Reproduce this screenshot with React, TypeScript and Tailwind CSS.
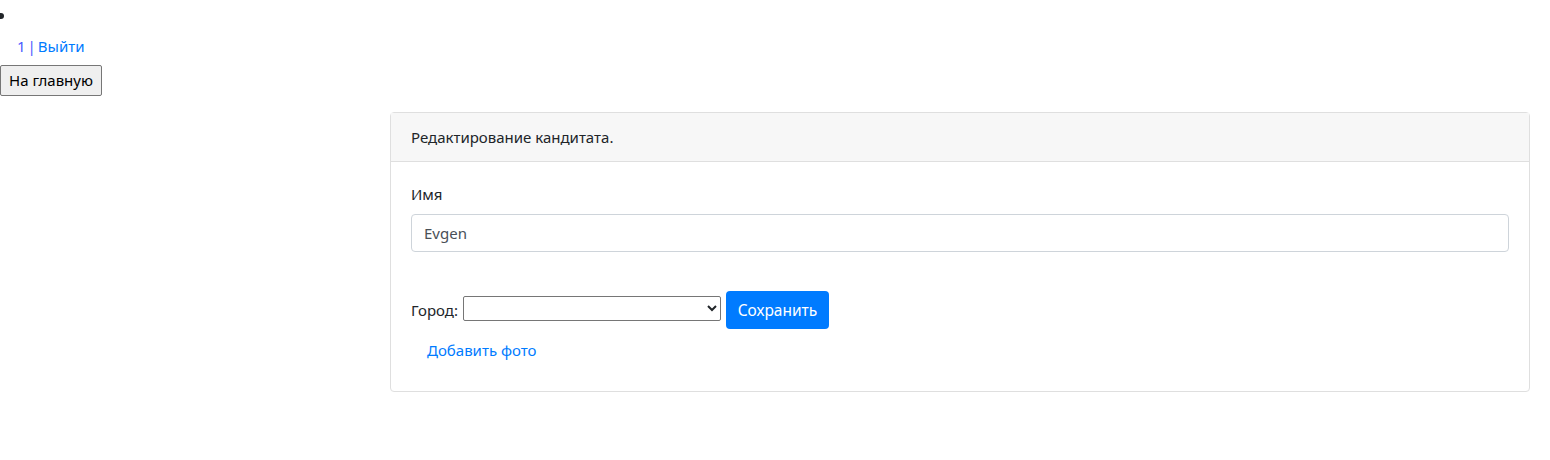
export default function App() {
  return (
    <div className="min-h-[460px] bg-white text-[16px] leading-6 text-[#212529]" style={{ fontFamily: '"Noto Sans", sans-serif' }}>
      <ul className="list-disc pl-0 pt-[3px]">
        <li className="ml-[16px] h-[21px]"></li>
      </ul>
      <div className="mt-[10px] pl-[17px] text-[15px] leading-6 flex">
        <span className="text-[#4a5cff]">1</span>
        <span className="ml-[2px] text-[#4a5cff]">|</span>
        <a href="#" className="ml-[2px] text-[#007bff]">Выйти</a>
      </div>
      <div className="mt-[7px]">
        <button className="border border-[#767676] bg-[#efefef] rounded-[2px] px-[8px] py-[1px] text-[15px] leading-[27px] text-black">
          На главную
        </button>
      </div>
      <div className="mt-[16px] ml-[390px] w-[1140px] border border-[#dfdfdf] rounded-[4px] text-[15px]">
        <div className="bg-[#f7f7f7] border-b border-[#dfdfdf] px-[20px] py-[12px] h-[49px] leading-6">
          Редактирование кандитата.
        </div>
        <div className="px-[20px] pt-[20px] pb-[29px]">
          <label className="block leading-6 mb-[8px]">Имя</label>
          <input
            defaultValue="Evgen"
            className="block w-full h-[38px] border border-[#ced4da] rounded-[4px] px-[12px] text-[#495057] outline-none"
          />
          <div className="mt-[39px] flex items-start">
            <span className="mt-[7px] leading-6">Город:</span>
            <select className="mt-[5px] ml-[5px] w-[258px] h-[25px] border border-[#767676] rounded-[2px] bg-white text-[13px]"></select>
            <button className="ml-[5px] h-[38px] w-[103px] bg-[#007bff] text-white rounded-[4px] text-[15.5px]">Сохранить</button>
          </div>
          <a href="#" className="block mt-[9px] ml-[16px] text-[#007bff] leading-6">Добавить фото</a>
        </div>
      </div>
    </div>
  );
}
